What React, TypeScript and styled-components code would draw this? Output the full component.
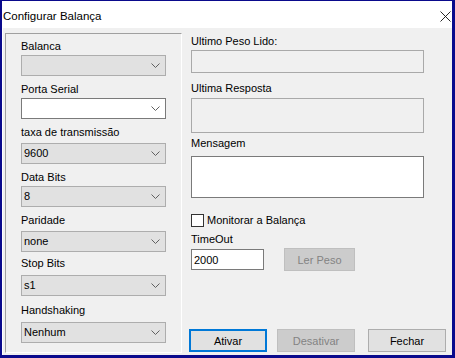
import styled, { createGlobalStyle } from "styled-components";

const GlobalStyle = createGlobalStyle`
  html, body {
    margin: 0;
    padding: 0;
    background: #ffffff;
  }
  body {
    font-family: "Liberation Sans", Arial, sans-serif;
    font-size: 11px;
    color: #000000;
  }
  * {
    box-sizing: border-box;
  }
`

type FieldProps = {
    label: string
    value?: string
    white?: boolean
    mt: number
    gap: number
}

function Chevron() {
    return (
        <svg width="9" height="5" viewBox="0 0 9 5">
            <polyline points="0.5,0.5 4.5,4.5 8.5,0.5" fill="none" stroke="#606060" strokeWidth="1"/>
        </svg>
    )
}

function ComboField(props: FieldProps) {
    return (
        <>
            <StyledLabel $mt={props.mt}>{props.label}</StyledLabel>
            <StyledCombo $mt={props.gap} $white={props.white}>
                <span>{props.value ?? ""}</span>
                <Chevron/>
            </StyledCombo>
        </>
    )
}

export default function App() {
    return (
        <>
            <GlobalStyle/>
            <StyledWindow>
                <StyledTitleBar>
                    <StyledTitle>Configurar Balança</StyledTitle>
                    <StyledClose width="11" height="11" viewBox="0 0 11 11">
                        <line x1="0.5" y1="0.5" x2="10.5" y2="10.5" stroke="#111" strokeWidth="0.9"/>
                        <line x1="10.5" y1="0.5" x2="0.5" y2="10.5" stroke="#111" strokeWidth="0.9"/>
                    </StyledClose>
                </StyledTitleBar>
                <StyledBody>
                    <StyledLeftPanel>
                        <ComboField label="Balanca" mt={6} gap={2}/>
                        <ComboField label="Porta Serial" mt={7} gap={2} white/>
                        <ComboField label="taxa de transmissão" value="9600" mt={7} gap={4}/>
                        <ComboField label="Data Bits" value="8" mt={7} gap={2}/>
                        <ComboField label="Paridade" value="none" mt={7} gap={4}/>
                        <ComboField label="Stop Bits" value="s1" mt={5} gap={5}/>
                        <ComboField label="Handshaking" value="Nenhum" mt={8} gap={5}/>
                    </StyledLeftPanel>
                    <StyledRightColumn>
                        <StyledLabel $mt={0}>Ultimo Peso Lido:</StyledLabel>
                        <StyledBox $mt={2} $height={23}/>
                        <StyledLabel $mt={9}>Ultima Resposta</StyledLabel>
                        <StyledBox $mt={3} $height={35}/>
                        <StyledLabel $mt={4}>Mensagem</StyledLabel>
                        <StyledBox $mt={6} $height={42} $white/>
                        <StyledCheckRow>
                            <StyledCheckBox/>
                            <span>Monitorar a Balança</span>
                        </StyledCheckRow>
                        <StyledLabel $mt={6}>TimeOut</StyledLabel>
                        <StyledTimeoutRow>
                            <StyledTimeoutInput>2000</StyledTimeoutInput>
                            <StyledButton $width={71} $disabled>Ler Peso</StyledButton>
                        </StyledTimeoutRow>
                        <StyledButtonRow>
                            <StyledButton $width={78} $default>Ativar</StyledButton>
                            <StyledButton $width={78} $ml={10} $disabled>Desativar</StyledButton>
                            <StyledButton $width={78} $ml={13}>Fechar</StyledButton>
                        </StyledButtonRow>
                    </StyledRightColumn>
                </StyledBody>
            </StyledWindow>
        </>
    )
}

const StyledWindow = styled.div`
  width: 455px;
  height: 358px;
  display: flex;
  flex-direction: column;
  border-style: solid;
  border-color: #0a0a8c;
  border-width: 1px 3px 3px 2px;
  background: #ffffff;
`

const StyledTitleBar = styled.div`
  height: 27px;
  display: flex;
  align-items: center;
  justify-content: space-between;
  padding: 4px 0 0 1px;
  background: #ffffff;
`

const StyledTitle = styled.span`
  font-size: 11.5px;
  line-height: 13px;
`

const StyledClose = styled.svg`
  margin-right: 1px;
`

const StyledBody = styled.div`
  flex: 1;
  display: flex;
  background: #f0f0f0;
  border-left: 1px solid #ffffff;
  padding: 5px 0 2px 2px;
`

const StyledLeftPanel = styled.div`
  width: 177px;
  display: flex;
  flex-direction: column;
  align-items: flex-start;
  padding-left: 15px;
  border-top: 1px solid #a0a0a0;
  border-left: 1px solid #a0a0a0;
  border-bottom: 1px solid #ffffff;
  border-right: 1px solid #ffffff;
`

const StyledLabel = styled.div<{ $mt: number }>`
  margin-top: ${props => props.$mt}px;
  line-height: 13px;
  height: 13px;
  white-space: nowrap;
`

const StyledCombo = styled.div<{ $mt: number, $white?: boolean }>`
  margin-top: ${props => props.$mt}px;
  width: 145px;
  height: 21px;
  display: flex;
  align-items: center;
  justify-content: space-between;
  padding: 0 5px 0 2px;
  background: ${props => props.$white ? "#ffffff" : "#e1e1e1"};
  border: 1px solid ${props => props.$white ? "#7a7a7a" : "#adadad"};
  line-height: 13px;
`

const StyledRightColumn = styled.div`
  flex: 1;
  display: flex;
  flex-direction: column;
  align-items: flex-start;
  padding: 2px 0 1px 9px;
`

const StyledBox = styled.div<{ $mt: number, $height: number, $white?: boolean }>`
  margin-top: ${props => props.$mt}px;
  width: 233px;
  height: ${props => props.$height}px;
  background: ${props => props.$white ? "#ffffff" : "#f0f0f0"};
  border: 1px solid ${props => props.$white ? "#7a7a7a" : "#a9a9a9"};
`

const StyledCheckRow = styled.div`
  margin-top: 16px;
  height: 13px;
  display: flex;
  align-items: center;
  gap: 3px;
  line-height: 13px;
`

const StyledCheckBox = styled.span`
  width: 13px;
  height: 13px;
  background: #ffffff;
  border: 1px solid #333333;
`

const StyledTimeoutRow = styled.div`
  margin-top: 2px;
  display: flex;
  align-items: flex-start;
  gap: 20px;
`

const StyledTimeoutInput = styled.div`
  margin-top: 1px;
  width: 73px;
  height: 21px;
  display: flex;
  align-items: center;
  padding-left: 2px;
  background: #ffffff;
  border: 1px solid #7a7a7a;
`

const StyledButtonRow = styled.div`
  margin-top: auto;
  margin-left: -2px;
  display: flex;
`

const StyledButton = styled.div<{ $width: number, $ml?: number, $disabled?: boolean, $default?: boolean }>`
  width: ${props => props.$width}px;
  height: 23px;
  margin-left: ${props => props.$ml ?? 0}px;
  display: flex;
  align-items: center;
  justify-content: center;
  background: ${props => props.$disabled ? "#cccccc" : "#e1e1e1"};
  border: ${props => props.$default ? "2px solid #0078d7" : props.$disabled ? "1px solid #bfbfbf" : "1px solid #adadad"};
  color: ${props => props.$disabled ? "#838383" : "#000000"};
`
